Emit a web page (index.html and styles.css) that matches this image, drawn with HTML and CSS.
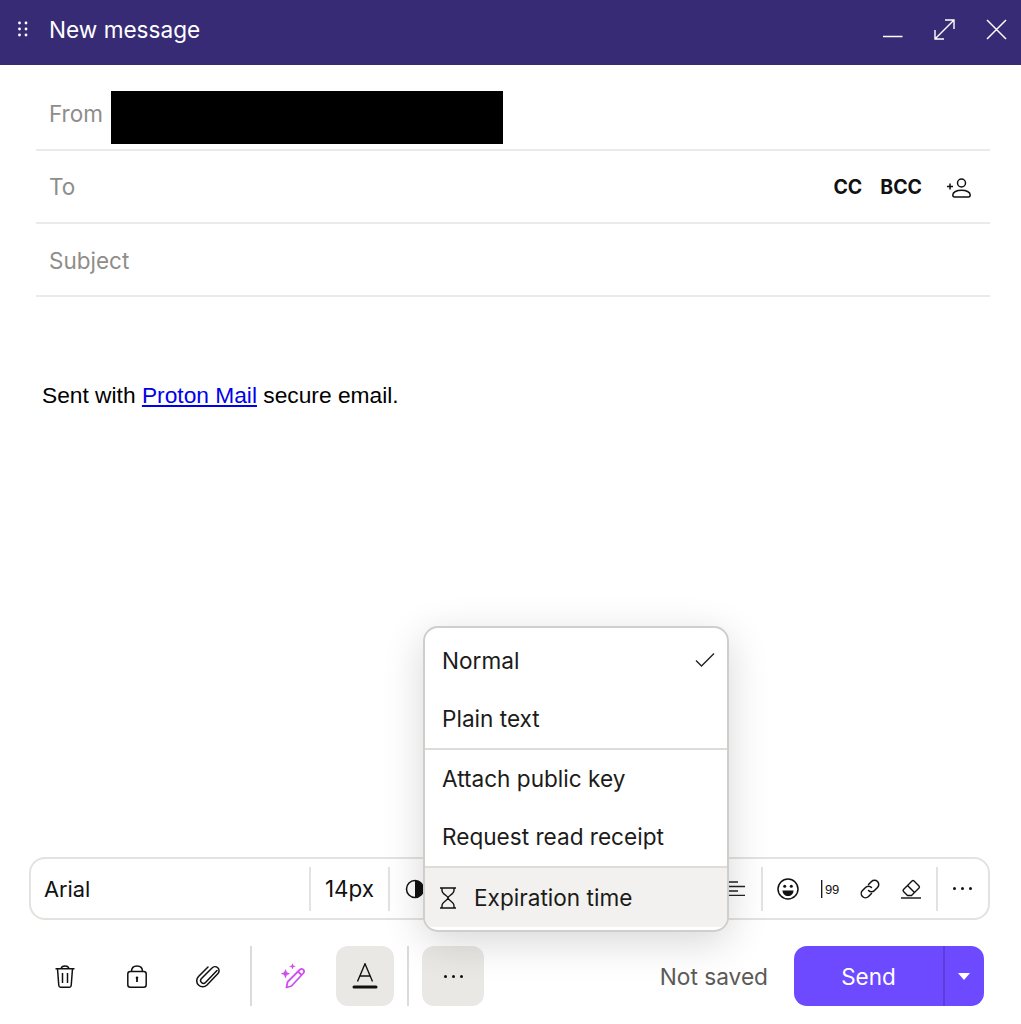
FILE: index.html
```html
<!DOCTYPE html>
<html lang="en">
<head>
<meta charset="utf-8">
<title>New message</title>
<link rel="stylesheet" href="styles.css">
</head>
<body>
<div class="composer">
  <header class="titlebar">
    <svg class="grip" width="12" height="16" viewBox="0 0 12 16"><g fill="#fff"><circle cx="2.500" cy="2" r="1.400"/><circle cx="9" cy="2" r="1.400"/><circle cx="2.500" cy="8" r="1.400"/><circle cx="9" cy="8" r="1.400"/><circle cx="2.500" cy="14" r="1.400"/><circle cx="9" cy="14" r="1.400"/></g></svg>
    <span class="title">New message</span>
    <div class="window-actions">
      <svg width="20" height="20" viewBox="0 0 20 20"><path d="M0 17.500H19.500" stroke="#fff" stroke-width="1.500" fill="none"/></svg>
      <svg width="21" height="21" viewBox="0 0 21 21"><path d="M1 20L20 1M11 1H20V10M1 11V20H10" stroke="#fff" stroke-width="1.400" fill="none"/></svg>
      <svg width="21" height="21" viewBox="0 0 21 21"><path d="M1 1L20 20M20 1L1 20" stroke="#fff" stroke-width="1.500" fill="none"/></svg>
    </div>
  </header>
  <div class="fields">
    <div class="field field-from"><span class="label">From</span><span class="redact"></span></div>
    <div class="field field-to">
      <span class="label">To</span>
      <div class="recipients">
        <b>CC</b><b>BCC</b>
        <svg class="add-person" width="25" height="20" viewBox="0 0 25 20" fill="none" stroke="#111" stroke-width="1.500"><path d="M0 8.500H6M3 5.500V11.500" /><circle cx="14.500" cy="5" r="4"/><path d="M5.800 17c0-3 4-4.800 8.700-4.800s8.700 1.800 8.700 4.800c0 1.400-.6 2-1.800 2H7.600c-1.200 0-1.800-.6-1.800-2z"/></svg>
      </div>
    </div>
    <div class="field field-subject"><span class="label">Subject</span></div>
  </div>
  <main class="body-text">Sent with <a href="#">Proton Mail</a> secure email.</main>
  <div class="format-bar">
    <span class="font-name">Arial</span>
    <i class="bar-sep"></i>
    <span class="font-size">14px</span>
    <i class="bar-sep"></i>
    <svg class="contrast" width="20" height="20" viewBox="0 0 20 20"><circle cx="10" cy="10" r="8.500" fill="none" stroke="#111" stroke-width="1.500"/><path d="M10 1.500a8.500 8.500 0 0 1 0 17z" fill="#111"/></svg>
    <div class="bar-right">
      <svg class="align" width="16" height="15" viewBox="0 0 16 15" fill="none" stroke="#222" stroke-width="1.300"><path d="M0 1H9M0 5.500H16M0 10H9M0 14.500H16"/></svg>
      <i class="bar-sep"></i>
      <svg class="b-emoji" width="22" height="22" viewBox="0 0 22 22"><circle cx="11" cy="11" r="10" fill="none" stroke="#111" stroke-width="1.500"/><circle cx="7.700" cy="8.300" r="1.500" fill="#111"/><circle cx="14.300" cy="8.300" r="1.500" fill="#111"/><path d="M5.500 12.500H16.500C16.500 16 14 18 11 18S5.500 16 5.500 12.500Z" fill="#111"/></svg>
      <svg class="b-quote" width="18" height="18" viewBox="0 0 18 18"><path d="M.7 0V18" stroke="#111" stroke-width="1.300"/><text x="4" y="14" class="quote-glyph">99</text></svg>
      <svg class="b-link" width="20" height="20" viewBox="0 0 20 20" fill="none" stroke="#111" stroke-width="1.500" stroke-linecap="round"><path d="M8.500 5.500L11.500 2.500a4 4 0 0 1 6 6L14.500 11.500a4 4 0 0 1-6 0"/><path d="M11.500 14.500L8.500 17.500a4 4 0 0 1-6-6L5.500 8.500a4 4 0 0 1 6 0"/></svg>
      <svg class="b-erase" width="20" height="20" viewBox="0 0 20 20" fill="none" stroke="#111" stroke-width="1.400"><path d="M6.500 16.500L2.500 12.500a1.500 1.500 0 0 1 0-2L11 2a1.500 1.500 0 0 1 2 0L18 7a1.500 1.500 0 0 1 0 2L10.500 16.500z" stroke-linejoin="round"/><path d="M6.500 6.500L13.500 13.500"/><path d="M0 19H20"/></svg>
      <i class="bar-sep"></i>
      <span class="dots"><i></i><i></i><i></i></span>
    </div>
  </div>
  <footer class="actions">
    <button class="icon-btn">
      <svg width="20" height="23" viewBox="0 0 20 23" fill="none" stroke="#111" stroke-width="1.500"><path d="M.5 3.800H19.500M6 3.800C6.500 1.500 8 1 10 1s3.500.5 4 2.800M2.500 3.800L3.800 20.500c.1 1 .8 1.700 1.800 1.700h8.800c1 0 1.700-.7 1.800-1.700L17.500 3.800M7.500 8V18M12.500 8V18"/></svg>
    </button>
    <button class="icon-btn">
      <svg width="20" height="23" viewBox="0 0 20 23" fill="none" stroke="#111" stroke-width="1.500"><path d="M4.500 6.500C4.500 2.500 6.500 1 10 1s5.500 1.500 5.500 5.500"/><rect x=".8" y="6.500" width="18.400" height="15.700" rx="2.500"/><path d="M10 12.500V17" stroke-width="1.800"/><circle cx="10" cy="12.800" r="1.300" fill="#111" stroke="none"/></svg>
    </button>
    <button class="icon-btn">
      <svg width="24" height="24" viewBox="0 0 24 24" fill="none" stroke="#111" stroke-width="1.500" stroke-linecap="round"><path d="M21 6L9.500 18a2.800 2.800 0 0 1-4-4L16 3.500a4 4 0 0 1 6 5.500L11 20.500a6 6 0 0 1-8.500-8.500L12 2.500" transform="translate(0 .5)"/></svg>
    </button>
    <i class="foot-sep"></i>
    <button class="icon-btn wand">
      <svg width="26" height="26" viewBox="0 0 26 26" fill="none" stroke="#cf4ff0" stroke-width="1.800"><path d="M5.500 24.500l1-5.500L19 6.500a2.500 2.500 0 0 1 3.500 3.500L10.500 23z" stroke-linejoin="round"/><path d="M17 8.500l3.500 3.500"/><path d="M4.500 6l1.400 3.300 3.300 1.400-3.300 1.400-1.400 3.300-1.400-3.300L-.2 10.700l3.300-1.400z" fill="#cf4ff0" stroke="none"/><path d="M11.500 0l.9 2.400 2.400.9-2.400.9-.9 2.400-.9-2.400-2.400-.9 2.400-.9z" fill="#cf4ff0" stroke="none"/></svg>
    </button>
    <button class="tile tile-a">
      <svg width="26" height="26" viewBox="0 0 26 26"><path d="M5.500 18.500L13 .8 20.500 18.500M7.800 13H18.200" fill="none" stroke="#111" stroke-width="1.400"/><rect x=".5" y="22.500" width="25" height="3" fill="#111" rx="1.500"/></svg>
    </button>
    <i class="foot-sep foot-sep-b"></i>
    <button class="tile tile-more"><span class="dots"><i></i><i></i><i></i></span></button>
    <span class="status">Not saved</span>
    <div class="send">
      <span class="send-main">Send</span>
      <span class="send-caret"></span>
    </div>
  </footer>
  <div class="menu">
    <div class="menu-group menu-first">
      <div class="menu-item"><span>Normal</span>
        <svg width="20" height="16" viewBox="0 0 20 16" fill="none" stroke="#222" stroke-width="1.400"><path d="M1 8.500L6.500 14 19 1.500"/></svg>
      </div>
      <div class="menu-item"><span>Plain text</span></div>
    </div>
    <div class="menu-group">
      <div class="menu-item"><span>Attach public key</span></div>
      <div class="menu-item"><span>Request read receipt</span></div>
    </div>
    <div class="menu-group menu-last">
      <div class="menu-item menu-active">
        <svg width="16" height="22" viewBox="0 0 16 22" fill="none" stroke="#111" stroke-width="1.400"><path d="M0 1H16M0 21H16M2 1V3.500C2 7 8 9 8 11S2 15 2 18.500V21M14 1V3.500C14 7 8 9 8 11S14 15 14 18.500V21"/></svg>
        <span>Expiration time</span>
      </div>
    </div>
  </div>
</div>
</body>
</html>
```
FILE: styles.css
```css
* { box-sizing: border-box; }
html, body { margin: 0; padding: 0; background: #fff; }
body { font-family: Inter, "Liberation Sans", sans-serif; color: #111; overflow: hidden; }
.composer { position: relative; width: 1021px; height: 1024px; display: flex; flex-direction: column; }
.titlebar { height: 65px; flex: none; background: #372b75; color: #fff; display: flex; align-items: center; padding: 0 14px 7px 17px; }
.grip { margin-right: 20px; }
.title { font-size: 22.600px; line-height: 30px; margin-top: 1px; }
.window-actions { margin-left: auto; display: flex; align-items: center; gap: 31px; }
.fields { padding: 0 31px 0 36px; flex: none; }
.field { display: flex; align-items: center; border-bottom: 2px solid #ebeae6; padding-left: 13px; }
.field-from { height: 86px; padding-top: 12px; gap: 8px; }
.field-to { height: 73px; }
.field-subject { height: 73px; padding-top: 1px; }
.label { color: #8f8d89; font-size: 22.500px; }
.redact { display: block; width: 392px; height: 53px; background: #000; align-self: flex-end; margin-bottom: 5px; }
.recipients { margin-left: auto; display: flex; align-items: center; padding-right: 18px; }
.recipients b { font-size: 19.500px; font-weight: 700; margin-right: 18px; color: #111; }
.recipients b:nth-child(2) { margin-right: 25px; }
.add-person { margin-top: 2px; }
.body-text { flex: 1; padding: 83px 0 0 42px; font-family: "Liberation Sans", Arial, sans-serif; font-size: 22.750px; line-height: 30px; color: #000; }
.body-text a { color: #0000ee; }
.format-bar { flex: none; height: 63px; margin: 0 31px 0 29px; border: 2px solid #e3e2de; border-radius: 16px; display: flex; align-items: center; padding-left: 13px; }
.font-name { width: 265px; font-size: 21.800px; }
.font-size { font-size: 22.400px; width: 77px; padding-left: 14px; }
.bar-sep { display: block; width: 2px; height: 44px; background: #e3e2de; flex: none; }
.contrast { margin-left: 15px; }
.bar-right { margin-left: auto; display: flex; align-items: center; padding-right: 16px; }
.align { margin-right: 16px; }
.b-emoji { margin-left: 14px; }
.b-quote { margin-left: 22px; }
.b-link { margin-left: 21px; }
.b-erase { margin-left: 21px; margin-right: 15px; }
.quote-glyph { font: 500 13px "Liberation Sans", sans-serif; letter-spacing: -.3px; fill: #111; }
.bar-right > .dots { margin-left: 15px; }
.dots { display: inline-flex; gap: 5px; }
.dots i { display: block; width: 3px; height: 3px; border-radius: 50%; background: #111; }
.actions { flex: none; height: 104px; padding: 26px 37px 18px 36px; display: flex; align-items: stretch; }
button { border: 0; background: none; padding: 0; font: inherit; color: inherit; display: flex; align-items: center; justify-content: center; }
.icon-btn { width: 58px; margin-right: 13.500px; }
.icon-btn:nth-child(3) { margin-right: 1px; }
.foot-sep { width: 2px; background: #dcdbd7; margin: 0 0 0 12px; flex: none; }
.foot-sep-b { margin-left: 13px; }
.wand { margin: 0 13px 0 13px; width: 58px; }
.tile { border-radius: 12px; background: #e9e8e4; }
.tile-a { width: 58px; }
.tile-more { width: 62px; margin-left: 13px; }
.status { margin-left: auto; align-self: center; font-size: 22.700px; color: #5c5a57; }
.send { margin-left: 26px; width: 190px; background: #6d4aff; border-radius: 13px; color: #fff; display: flex; }
.send-main { width: 151px; display: flex; align-items: center; justify-content: center; font-size: 22.500px; border-right: 2px solid #5b3fd6; }
.send-caret { flex: 1; position: relative; }
.send-caret::after { content: ""; position: absolute; left: 13px; top: 27px; border: 6.500px solid transparent; border-top: 7.500px solid #fff; border-bottom: 0; }
.menu { position: absolute; left: 423px; top: 626px; width: 306px; height: 306px; background: #fff; border: 2px solid #cfcecb; border-radius: 15px; box-shadow: 0 10px 40px rgba(0,0,0,.16); overflow: hidden; }
.menu-group { border-bottom: 2px solid #dddcd8; }
.menu-first { padding-top: 4px; }
.menu-last { border-bottom: 0; }
.menu-item { height: 58px; padding: 0 12px 2px 17px; display: flex; align-items: center; justify-content: space-between; font-size: 22.600px; color: #1c1b1a; }
.menu-item:nth-child(2) { padding-bottom: 1px; }
.menu-active { background: #f2f1ef; justify-content: flex-start; gap: 18px; padding: 0 0 0 15px; height: 59px; }
```
